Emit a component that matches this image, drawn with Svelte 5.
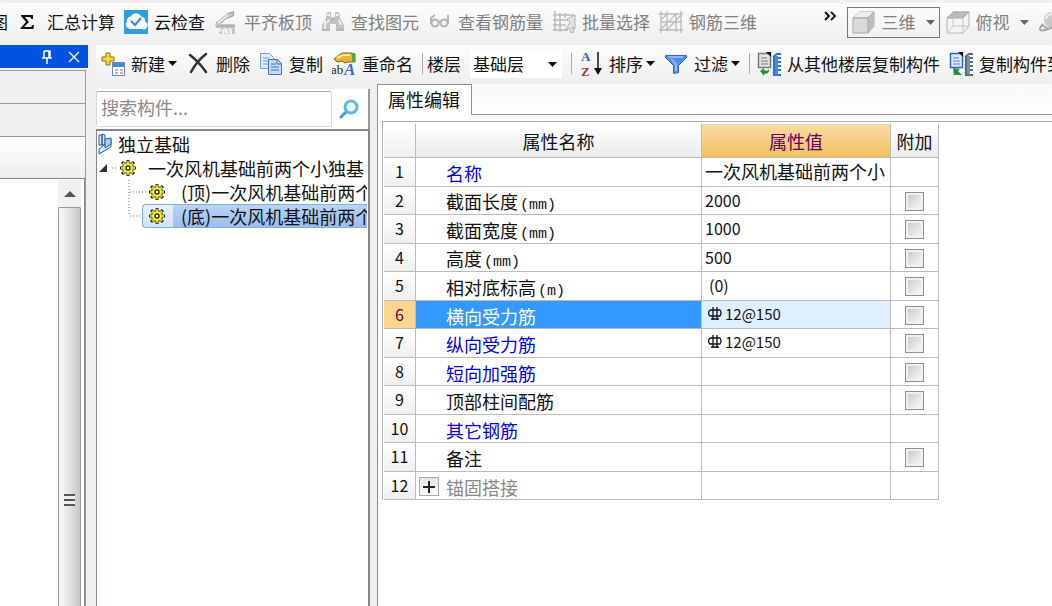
<script>
  const tools = [
    { icon: 'sigma', label: '汇总计算' },
    { icon: 'cloud', label: '云检查' },
    { icon: 'slab', label: '平齐板顶', disabled: true },
    { icon: 'binoculars', label: '查找图元', disabled: true },
    { icon: 'glasses', label: '查看钢筋量', disabled: true },
    { icon: 'batch', label: '批量选择', disabled: true },
    { icon: 'grid3d', label: '钢筋三维', disabled: true },
  ];

  const rows = [
    { name: '名称', value: '一次风机基础前两个小', blue: true, extra: false },
    { name: '截面长度', unit: '(mm)', value: '2000', extra: true },
    { name: '截面宽度', unit: '(mm)', value: '1000', extra: true },
    { name: '高度', unit: '(mm)', value: '500', extra: true },
    { name: '相对底标高', unit: '(m)', value: '(0)', extra: true },
    { name: '横向受力筋', value: '12@150', rebar: true, blue: true, extra: true },
    { name: '纵向受力筋', value: '12@150', rebar: true, blue: true, extra: true },
    { name: '短向加强筋', value: '', blue: true, extra: true },
    { name: '顶部柱间配筋', value: '', extra: true },
    { name: '其它钢筋', value: '', blue: true, extra: false },
    { name: '备注', value: '', extra: true },
    { name: '锚固搭接', value: '', group: true, extra: false },
  ];

  let selected = $state(5);
  let floor = $state('基础层');
  let search = $state('');
</script>

{#snippet icon(name)}
  <svg class="icon" width="24" height="24" viewBox="0 0 24 24" fill="none" aria-hidden="true">
    {#if name === 'sigma'}
      <path d="M4 5h12v4h-1.500q-.5-2-2.500-2H8l4 5-5 5h6q2 0 2.500-2H17l-.6 4H3.500v-1l5.500-6-5-6z" fill="#111" />
    {:else if name === 'cloud'}
      <rect width="24" height="24" fill="#2f9fe0" />
      <path d="M6 19a4.500 4.500 0 0 1-3-7.500 4 4 0 0 1 4-5 5.500 5.500 0 0 1 10 0 4 4 0 0 1 4 5 4 4 0 0 1-3 7.500z" fill="#f3faff" />
      <path d="M7 11l4 4 6-7" stroke="#3b8db5" stroke-width="2" />
    {:else if name === 'slab'}
      <path d="M1 14L14 3l6-2v5l-8 3-5 5h14v10h-3v-5h-2v5h-2v-5h-2v5h-2v-5H8v5H5v-6H2z" fill="#c6c6c6" />
      <path d="M2 13L15 3l5-1-1 4-8 3-4 4M3 16h18" stroke="#a2a2a2" />
      <path d="M4 13l10-8M6 18v4M11 18v5M16 18v5" stroke="#ededed" stroke-width="2" />
    {:else if name === 'binoculars'}
      <path d="M5 4l2-2h3v5h4V2h3l2 2v4l4 7v6h-8v-7h-6v7H1v-6l4-7z" fill="#c2c2c2" />
      <path d="M4 11v8M6 5h3M15 5h3M18 10l2 5M8 10l-2 3" stroke="#f2f2f2" stroke-width="2" />
      <path d="M1 20h8M15 20h8M10 10h4" stroke="#aaa" />
    {:else if name === 'glasses'}
      <g stroke="#b4b4b4" stroke-width="2">
        <circle cx="7" cy="13" r="3.500" /><circle cx="16" cy="13" r="3.500" />
        <path d="M3 14V8l4-3M20 14V5M10 12l2-1" />
      </g>
    {:else if name === 'batch'}
      <path d="M3 1v19M8 3v19M1 5h21M1 10h15M1 15h13M1 20h15M13 3v5" stroke="#bbb" stroke-width="1.500" />
      <path d="M15 9l8-4v14l-3-2 2 5-3 1-2-5-4 3 5-9z" fill="#e2e2e2" stroke="#b4b4b4" />
    {:else if name === 'grid3d'}
      <path d="M2 1v22M8 1v20M17 3v19M22 1v22M0 4h24M2 12h21M0 20h24M2 19L17 4M8 20L22 5M2 10l6-6" stroke="#bcbcbc" stroke-width="1.300" />
    {:else if name === 'cube'}
      <path d="M1 8l6-6h15v14l-6 7H1z" fill="#dadada" stroke="#aaa" />
      <path d="M1 8h15v15M16 8l6-6" stroke="#999" /><path d="M2 7l5-5h14l-5 5z" fill="#eee" />
      <path d="M17 9l4-5v12l-4 5z" fill="#bcbcbc" />
    {:else if name === 'topview'}
      <path d="M1 8l6-6h16v14l-6 7H1z" fill="#f4f4f4" stroke="#b4b4b4" />
      <path d="M1 8l6-6h16l-6 6z" fill="#bbb" stroke="#aaa" />
      <path d="M17 8v15M7 8v8h15M7 16l-6 7" stroke="#c4c4c4" />
    {:else if name === 'orbit'}
      <circle cx="14" cy="10" r="8" fill="#c8c8c8" />
      <path d="M5 14q-7 8 2 6T24 9M4 15l6 4" stroke="#a4a4a4" stroke-width="2" />
      <path d="M8 9q2-6 8-5" stroke="#eee" stroke-width="2" />
    {:else if name === 'new'}
      <path d="M5 1h4v4h4v4H9v4H5V9H1V5h4z" fill="#f4dc35" stroke="#84701c" />
      <rect x="11.500" y="10.500" width="12" height="13" fill="#fff" stroke="#718bb8" />
      <path d="M12 11h11v4H12z" fill="#4c86dc" />
      <path d="M14 18h3M19 18h3M14 21h3M19 21h3" stroke="#a9b9d2" stroke-width="2" />
    {:else if name === 'delete'}
      <path d="M4 3q9 7 16 17M20 2Q11 9 5 20" stroke="#333" stroke-width="2.500" stroke-linecap="round" />
    {:else if name === 'copy'}
      <path d="M1.500 1.500h9l4 4v11h-13z" fill="#dceafe" stroke="#819dc9" />
      <path d="M4 6h6M4 9h6M4 12h6" stroke="#6e9be0" />
      <path d="M9.500 7.500h9l4 4v11h-13z" fill="#c3d9fa" stroke="#4c6ea9" />
      <path d="M18 7v5h5M12 12h5M12 15h8M12 18h8" stroke="#3b70bf" />
    {:else if name === 'rename'}
      <path d="M2 7l8-6h9l4 1v8h-7l-3 1-3-2-5 1z" fill="#e5b53b" stroke="#80651f" />
      <path d="M5 6l6-3h7" stroke="#ffe892" stroke-width="2" /><path d="M20 1h3v9h-3z" fill="#57a43c" />
      <text x="-1" y="22" font-family="Liberation Serif, serif" font-size="13" fill="#222">ab</text>
      <text x="12" y="23" font-family="Liberation Serif, serif" font-size="17" font-weight="bold" font-style="italic" fill="#2f6cd2">A</text>
    {:else if name === 'sort'}
      <text x="2" y="9" font-family="Liberation Serif, serif" font-size="13" font-weight="bold" fill="#3a5fae">A</text>
      <text x="2" y="24" font-family="Liberation Serif, serif" font-size="13" font-weight="bold" fill="#a23a3a">Z</text>
      <path d="M19 0v17" stroke="#111" stroke-width="1.500" /><path d="M15 16h8l-4 7z" fill="#111" />
    {:else if name === 'filter'}
      <path d="M1.500 3.500h21v2l-8 8v7l-5 1v-8l-8-8z" fill="#4f8fe9" stroke="#3365bb" />
      <path d="M4 5h15M7 7l5 5v7" stroke="#9cc4fb" stroke-width="1.500" />
    {:else if name === 'copyfrom' || name === 'copyto'}
      <path d="M1.500 1.500h12v14h-12z" fill={name === 'copyfrom' ? '#e4e4e4' : '#dce9ff'} stroke={name === 'copyfrom' ? '#777' : '#3563c2'} stroke-width="1.500" />
      <path d="M4 6h6M4 9h7M4 12h7" stroke={name === 'copyfrom' ? '#777' : '#507ddd'} />
      <path d="M9 0h5v5z" fill="#111" />
      {#if name === 'copyfrom'}
        <path d="M3 19l4-3v2q4 2 5-1 1 5-5 5v2z" fill="#21933b" />
      {:else}
        <path d="M4 16l7 1-2 2 4 4H5z" fill="#21933b" />
      {/if}
      <path d="M16 5l4-3h4M16 9l4-3h4M16 13l4-3h4M16 17l4-3h4M16 21l4-3h4M16 23h8M17 5v18" stroke={name === 'copyfrom' ? '#2f6fce' : '#4f6c7e'} stroke-width="2" />
      <path d="M18 4h3v19h-3z" fill={name === 'copyfrom' ? '#4e88dc' : '#7894a5'} />
    {/if}
  </svg>
{/snippet}

{#snippet caret(color = '#111')}
  <svg width="9" height="5" viewBox="0 0 9 5" aria-hidden="true"><path d="M0 0h9L4.500 5z" fill={color} /></svg>
{/snippet}

{#snippet gear()}
  <svg width="16" height="16" viewBox="0 0 16 16" fill="none" aria-hidden="true">
    <path d="M8 0v16M0 8h16M2 2l12 12M14 2L2 14" stroke="#333" stroke-width="3" />
    <circle cx="8" cy="8" r="5.500" fill="#f7ef16" stroke="#444" />
    <path d="M8 1v14M1 8h14M3 3l10 10M13 3L3 13" stroke="#f7ef16" stroke-width="1.500" />
    <circle cx="8" cy="8" r="2" fill="#fff" stroke="#333" stroke-width="1.500" />
  </svg>
{/snippet}

<div class="app">
  <header class="topbar">
    <div class="bar views-bar">
      <button class="clipped">图</button>
      {#each tools as tool (tool.label)}
        <button disabled={tool.disabled}>{@render icon(tool.icon)}{tool.label}</button>
      {/each}
      <button class="more" aria-label="更多">
        <svg width="13" height="10" viewBox="0 0 13 10" fill="none"><path d="M1 1l4 4-4 4M7 1l4 4-4 4" stroke="#111" stroke-width="2" /></svg>
      </button>
    </div>
    <div class="bar camera-bar">
      <button class="framed" disabled>{@render icon('cube')}三维<span class="drop">{@render caret('#666')}</span></button>
      <button disabled>{@render icon('topview')}俯视<span class="drop">{@render caret('#666')}</span></button>
      <button disabled aria-label="动态观察">{@render icon('orbit')}</button>
    </div>
  </header>

  <aside class="dock">
    <div class="dock-title">
      <button aria-label="固定">
        <svg width="12" height="14" viewBox="0 0 12 14" fill="none"><path d="M3 1h6v7M3 1v7M1 8h10M6 8v6M8 1v7" stroke="#fff" stroke-width="1.500" /></svg>
      </button>
      <button aria-label="关闭">
        <svg width="12" height="12" viewBox="0 0 12 12"><path d="M1 1l10 10M11 1L1 11" stroke="#fff" stroke-width="1.300" /></svg>
      </button>
    </div>
    <div class="dock-body">
      <div class="dock-tab"></div>
      <div class="dock-tab"></div>
      <div class="dock-tools"></div>
      <div class="dock-list">
        <div class="scrollbar">
          <div class="scroll-up">
            <svg width="12" height="6" viewBox="0 0 12 6"><path d="M0 6l6-6 6 6z" fill="#555" /></svg>
          </div>
          <div class="thumb"><span class="grip"></span></div>
        </div>
      </div>
    </div>
  </aside>

  <main>
    <div class="bar edit-bar">
      <button>{@render icon('new')}新建<span class="caret">{@render caret()}</span></button>
      <button>{@render icon('delete')}删除</button>
      <button>{@render icon('copy')}复制</button>
      <button>{@render icon('rename')}重命名</button>
      <span class="sep"></span>
      <label for="floor">楼层</label>
      <span class="select">
        <select id="floor" bind:value={floor}>
          <option>基础层</option>
          <option>首层</option>
        </select>
        <span class="select-caret">{@render caret()}</span>
      </span>
      <span class="sep"></span>
      <button>{@render icon('sort')}排序<span class="caret">{@render caret()}</span></button>
      <button>{@render icon('filter')}过滤<span class="caret">{@render caret()}</span></button>
      <span class="sep"></span>
      <button>{@render icon('copyfrom')}从其他楼层复制构件</button>
      <button>{@render icon('copyto')}复制构件到</button>
    </div>

    <div class="panes">
      <section class="components">
        <div class="search">
          <input type="text" placeholder="搜索构件..." aria-label="搜索构件" bind:value={search} />
          <button aria-label="搜索">
            <svg width="20" height="20" viewBox="0 0 20 20" fill="none">
              <path d="M2 18l6-6" stroke="#3f9ddd" stroke-width="3" stroke-linecap="round" />
              <circle cx="12" cy="8" r="6" fill="#effaff" stroke="#5cb9ee" stroke-width="3" />
            </svg>
          </button>
        </div>
        <ul class="tree">
          <li>
            <div class="node">
              <svg class="book" width="15" height="22" viewBox="0 0 15 22" fill="#d9ebfb" stroke="#245e9e">
                <path d="M1 2h3v10H1zM4 1l3 1v10H4zM1 16l12-10v8L1 21z" /><path d="M7 6l6-1v6l-6 4z" fill="#a5cdf1" />
              </svg>
              独立基础
            </div>
            <ul>
              <li>
                <div class="node">
                  <svg width="22" height="24" viewBox="0 0 22 24"><path d="M9 8v8H1z" fill="#333" /><path d="M14 12h6" stroke="#777" stroke-dasharray="1 2" /></svg>
                  {@render gear()}
                  <span class="text">一次风机基础前两个小独基</span>
                </div>
                <ul class="leaves">
                  <li>
                    <div class="node">
                      <svg width="19" height="24" viewBox="0 0 19 24" fill="none"><path d="M1 0v24M2 12h16" stroke="#777" stroke-dasharray="1 2" /></svg>
                      <span class="leaf">{@render gear()}<span class="text">(顶)一次风机基础前两个</span></span>
                    </div>
                  </li>
                  <li>
                    <div class="node">
                      <svg width="14" height="24" viewBox="0 0 14 24" fill="none"><path d="M1 0v12M2 12h12" stroke="#777" stroke-dasharray="1 2" /></svg>
                      <span class="leaf current">{@render gear()}<span class="text">(底)一次风机基础前两个</span></span>
                    </div>
                  </li>
                </ul>
              </li>
            </ul>
          </li>
        </ul>
      </section>

      <section class="properties">
        <div class="tabs"><button class="tab">属性编辑</button></div>
        <div class="sheet">
          <table>
            <thead>
              <tr>
                <th class="num"></th>
                <th class="name">属性名称</th>
                <th class="value">属性值</th>
                <th class="extra">附加</th>
              </tr>
            </thead>
            <tbody>
              {#each rows as row, i (row.name)}
                <tr class:active={i === selected} onclick={() => (selected = i)}>
                  <td class="num">{i + 1}</td>
                  <td class="name" class:blue={row.blue} class:group={row.group}>
                    <div class="cell">
                      {#if row.group}
                        <button class="expand" aria-label="展开">
                          <svg width="12" height="12" viewBox="0 0 12 12"><path d="M6 0v12M0 6h12" stroke="#222" stroke-width="2" /></svg>
                        </button>
                      {/if}
                      <span>{row.name}</span>{#if row.unit}<span class="unit">{row.unit}</span>{/if}
                    </div>
                  </td>
                  <td class="value" class:paren={row.value === '(0)'}>
                    <div class="cell" class:rebar={row.rebar}>
                      {#if row.rebar}
                        <svg width="14" height="14" viewBox="0 0 14 14" fill="none" stroke="#111" stroke-width="1.300">
                          <path d="M5 0v13M9 0v13M2 3h10q2 3 0 6H2q-3-3 0-6M3 12h8" />
                        </svg>
                      {/if}
                      {row.value}
                    </div>
                  </td>
                  <td class="extra">
                    {#if row.extra}<input type="checkbox" aria-label={`附加 ${row.name}`} />{/if}
                  </td>
                </tr>
              {/each}
            </tbody>
          </table>
        </div>
      </section>
    </div>
  </main>
</div>

<style>
  :global(body) {
    background: #f0f0f0;
    overflow: hidden;
  }

  .app {
    display: grid;
    grid-template-columns: 88px minmax(0, 1fr);
    grid-template-rows: auto 1fr;
    min-height: 100vh;
    font-family: "Noto Sans CJK SC", sans-serif;
    font-size: 17px;
    line-height: 24px;
    color: #111;
  }

  button {
    display: flex;
    align-items: center;
    flex: none;
    padding: 0;
    border: 0;
    background: none;
    font: inherit;
    color: inherit;
    white-space: nowrap;
  }

  button:disabled {
    color: #808080;
  }

  svg {
    flex: none;
    display: block;
  }

  .icon {
    margin-right: 6px;
  }

  .topbar {
    grid-column: 1 / -1;
    display: flex;
    padding-top: 3px;
    overflow: hidden;
  }

  .bar {
    display: flex;
    align-items: center;
    gap: 9px;
    box-sizing: border-box;
    background: linear-gradient(#fdfdfd, #eeeeee);
    border-radius: 4px;
  }

  .views-bar {
    flex: 0 0 80%;
    height: 42px;
    padding: 0 5px 4px 0;
  }

  .clipped {
    margin-left: -9px;
  }

  .more {
    margin: 0 0 12px auto;
  }

  .camera-bar {
    flex: 1 0 auto;
    padding: 0 0 4px 5px;
    gap: 6px;
  }

  .framed {
    height: 31px;
    padding: 0 4px;
    border: 1px solid #777;
  }

  .drop {
    margin: 0 3px 0 10px;
  }

  .framed .drop {
    margin-right: 0;
  }

  .dock-title {
    display: flex;
    justify-content: flex-end;
    align-items: center;
    gap: 15px;
    height: 23px;
    padding: 0 8px;
    background: #0052e0;
  }

  .dock {
    display: flex;
    flex-direction: column;
  }

  .dock-body {
    display: flex;
    flex-direction: column;
    flex: 1;
    margin: 2px 2px 0 0;
    border-top: 1px solid #999;
    border-right: 1px solid #999;
  }

  .dock-tab {
    height: 32px;
    border-bottom: 1px solid #999;
  }

  .dock-tools {
    height: 41px;
    background: linear-gradient(#fff, #eee);
  }

  .dock-list {
    display: flex;
    flex: 1;
    justify-content: flex-end;
    border-top: 1px solid #828790;
    border-right: 1px solid #828790;
    padding: 1px 3px 0 0;
    background: #fff;
  }

  .scrollbar {
    display: flex;
    flex-direction: column;
    width: 23px;
    background: #f0f0f0;
  }

  .scroll-up {
    display: flex;
    justify-content: center;
    align-items: center;
    height: 27px;
  }

  .thumb {
    display: flex;
    flex: 1;
    align-items: center;
    justify-content: center;
    padding-top: 186px;
    border: 1px solid #979797;
    border-bottom: 0;
    border-radius: 2px 2px 0 0;
    background: linear-gradient(90deg, #f6f6f6, #e6e6e8 45%, #c5c5ca);
  }

  .grip {
    width: 11px;
    height: 12px;
    background: repeating-linear-gradient(#555 0 2px, #eee 2px 5px);
  }

  main {
    display: flex;
    flex-direction: column;
    padding-left: 8px;
    min-width: 0;
  }

  .edit-bar {
    height: 39px;
    padding: 0 0 2px 5px;
    overflow: hidden;
  }

  .caret {
    margin-left: 3px;
  }

  .sep {
    flex: none;
    width: 1px;
    height: 21px;
    margin-right: -2px;
    background: #aaa;
  }

  .sep + label {
    margin-left: -3px;
  }

  label {
    flex: none;
  }

  .select {
    position: relative;
    flex: none;
    width: 92px;
    height: 28px;
    background: #fff;
  }

  select {
    width: 100%;
    height: 100%;
    padding: 0 3px;
    border: 0;
    appearance: none;
    background: #fff;
    font: inherit;
    color: inherit;
  }

  .select-caret {
    position: absolute;
    top: 12px;
    right: 5px;
    pointer-events: none;
  }

  .panes {
    display: flex;
    flex: 1;
  }

  .components {
    display: flex;
    flex-direction: column;
    width: 274px;
    flex: none;
    margin: 5px 7px 0 0;
  }

  .search {
    display: flex;
    align-items: center;
    justify-content: space-between;
    height: 40px;
    padding-right: 9px;
    border-right: 2px solid #999;
    background: #fff;
    box-sizing: border-box;
  }

  .search input {
    width: 236px;
    height: 36px;
    padding: 0 4px 4px;
    border: 1px solid #d5dbe3;
    border-top-color: #abadb3;
    border-radius: 2px;
    box-sizing: border-box;
    font: inherit;
    font-size: 18px;
  }

  .search input::placeholder {
    color: #8a8a8a;
  }

  .tree {
    flex: 1;
    padding: 1px 1px 0;
    border: 1px solid #828790;
    border-top-width: 2px;
    border-right-width: 2px;
    border-bottom: 0;
    background: #fff;
    font-size: 18px;
    overflow: hidden;
  }

  ul {
    margin: 0;
    padding: 0;
    list-style: none;
  }

  .node {
    display: flex;
    align-items: center;
    height: 24px;
    white-space: nowrap;
  }

  .book {
    margin-right: 5px;
  }

  .node .text {
    margin-left: 12px;
  }

  .leaves {
    padding-left: 30px;
  }

  .leaf {
    display: flex;
    flex: 1;
    align-items: center;
    min-width: 0;
    overflow: hidden;
    padding-left: 2px;
  }

  .leaf .text {
    padding-left: 4px;
  }

  .current {
    height: 22px;
    padding-left: 6px;
    border: 1px solid #84acdd;
    border-right: 0;
    border-radius: 4px 0 0 4px;
    background: linear-gradient(#e8f1fd, #cfe2fb);
  }

  .current .text {
    margin-left: 8px;
    padding-left: 8px;
    background: linear-gradient(#bad4f7, #9abdee);
  }

  .properties {
    display: flex;
    flex: 1;
    flex-direction: column;
    min-width: 0;
  }

  .tabs {
    display: flex;
    height: 31px;
    background: linear-gradient(#f8f8f8, #fff);
  }

  .tabs::after {
    content: "";
    flex: 1;
    border-bottom: 1px solid #8c8e94;
  }

  .tab {
    padding: 0 11px 2px 10px;
    border: 1px solid #8c8e94;
    border-bottom: 0;
    background: #fff;
    font-size: 18px;
  }

  .sheet {
    flex: 1;
    padding: 6px 0 0 4px;
    border-left: 1px solid #8c8e94;
    background: #fff;
  }

  .sheet::before {
    content: "";
    display: block;
    border-top: 1px solid #b0b0b8;
  }

  table {
    width: 557px;
    padding: 2px 0 0 1px;
    border-left: 1px solid #b0b0b8;
    border-spacing: 0;
    table-layout: fixed;
    font-size: 18px;
  }

  th,
  td {
    height: 28px;
    padding: 0;
    border-right: 1px solid #bbb;
    border-bottom: 1px solid #bbb;
    box-sizing: border-box;
    font-weight: normal;
    line-height: 22px;
    white-space: nowrap;
  }

  tbody tr:nth-child(odd) td {
    height: 29px;
  }

  th {
    height: 34px;
    background: linear-gradient(#fff, #ebebeb);
  }

  th.value {
    color: #600060;
    background: linear-gradient(#fbdca6, #f0c060);
  }

  .num {
    width: 32px;
    text-align: center;
    background: linear-gradient(#fff, #efefef);
  }

  td.num {
    padding-bottom: 2px;
    font-size: 16px;
  }

  .name {
    width: 286px;
  }

  .value {
    width: 189px;
  }

  .extra {
    text-align: center;
  }

  .cell {
    display: flex;
    align-items: center;
    overflow: hidden;
  }

  td.name .cell {
    align-items: baseline;
    padding: 2px 0 0 30px;
  }

  td.value .cell {
    padding: 0 0 2px 3px;
  }

  tr:not(:first-child) td.value {
    font-size: 16px;
  }

  .unit {
    margin-left: 2px;
    font-family: "Liberation Mono", monospace;
    font-size: 15px;
    line-height: 14px;
  }

  td.value.paren .cell {
    padding-left: 7px;
  }

  td.value .rebar {
    gap: 3px;
    padding-left: 6px;
    font-size: 15px;
  }

  .blue {
    color: #0000f0;
  }

  td.group {
    color: #888;
  }

  td.group .cell {
    align-items: center;
    gap: 7px;
    padding-left: 3px;
  }

  .expand {
    justify-content: center;
    width: 20px;
    height: 19px;
    border: 1px solid #aaa;
    background: linear-gradient(#e4e6ea, #f8f8f8);
  }

  .active .num {
    color: #600060;
    background: #ffd58c;
  }

  .active .name {
    color: #fff;
    background: #3399ff;
  }

  .active .value {
    background: #dfeffe;
  }

  td input {
    display: block;
    width: 19px;
    height: 19px;
    margin: 1px auto 0;
    padding: 2px;
    border: 1px solid #8e8f8f;
    appearance: none;
    box-sizing: border-box;
    background: linear-gradient(135deg, #c9cdd3, #f6f6f6) content-box, #f1f1f1;
  }
</style>
